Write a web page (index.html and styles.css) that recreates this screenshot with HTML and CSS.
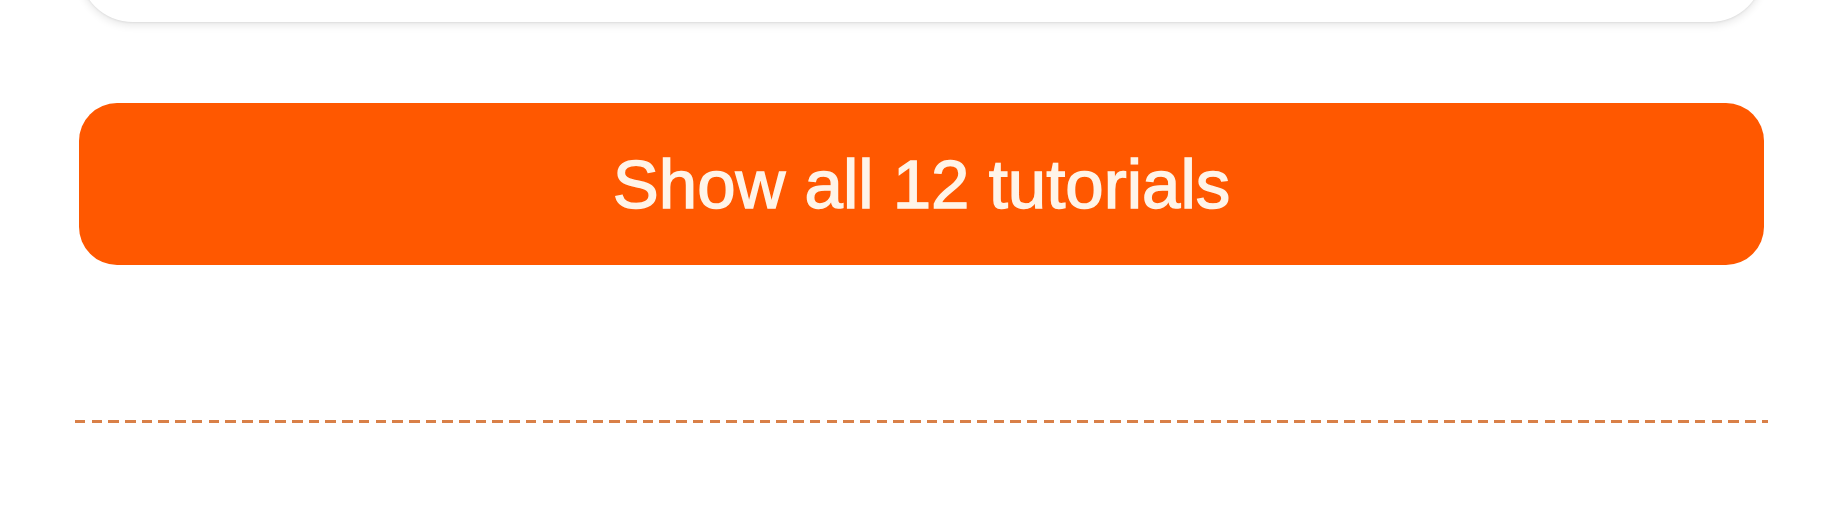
FILE: index.html
```html
<!DOCTYPE html>
<html lang="en">
<head>
<meta charset="utf-8">
<title>Tutorials</title>
<link rel="stylesheet" href="styles.css">
</head>
<body>
  <main class="page">
    <div class="card"></div>
    <a class="show-all" href="#">Show all 12 tutorials</a>
    <div class="divider"></div>
  </main>
</body>
</html>
```

FILE: styles.css
```css
html, body {
  margin: 0;
  padding: 0;
  background: #ffffff;
}

body {
  font-family: "Liberation Sans", Arial, sans-serif;
  overflow: hidden;
}

.page {
  display: flex;
  flex-direction: column;
  padding: 0 79px;
}

.card {
  height: 140px;
  margin-top: -118px;
  background: #ffffff;
  border-radius: 54px;
  box-shadow: 0 3px 8px rgba(0, 0, 0, 0.10), 0 1px 2px rgba(0, 0, 0, 0.06);
}

.show-all {
  margin-top: 81px;
  height: 162px;
  display: flex;
  align-items: center;
  justify-content: center;
  background: #ff5800;
  border-radius: 38px;
  color: #fff4e8;
  font-size: 69px;
  -webkit-text-stroke: 1.4px #fff4e8;
  text-decoration: none;
}

.divider {
  margin: 155px -4px 0 -4px;
  height: 3px;
  background: repeating-linear-gradient(to right, #d98048 0, #d98048 10.5px, transparent 10.5px, transparent 16.7px);
}
```
